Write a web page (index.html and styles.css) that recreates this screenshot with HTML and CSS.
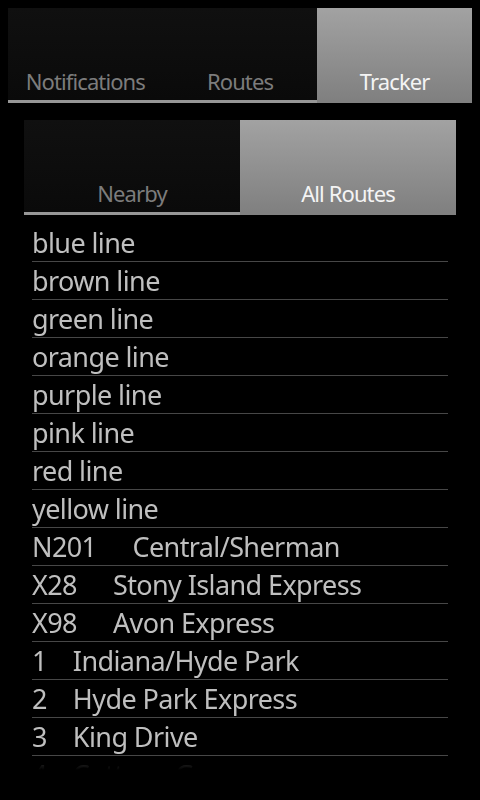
FILE: index.html
```html
<!DOCTYPE html>
<html>
<head>
<meta charset="utf-8">
<link rel="stylesheet" href="styles.css">
</head>
<body>
<div class="screen">
  <div class="tabs outer">
    <div class="tab">Notifications</div>
    <div class="tab">Routes</div>
    <div class="tab active">Tracker</div>
  </div>
  <div class="content">
    <div class="tabs inner">
      <div class="tab">Nearby</div>
      <div class="tab active">All Routes</div>
    </div>
    <div class="list">
      <div class="row">blue line</div>
      <div class="row">brown line</div>
      <div class="row">green line</div>
      <div class="row">orange line</div>
      <div class="row">purple line</div>
      <div class="row">pink line</div>
      <div class="row">red line</div>
      <div class="row">yellow line</div>
      <div class="row"><span class="num">N201</span><span class="name gap-n">Central/Sherman</span></div>
      <div class="row"><span class="num">X28</span><span class="name gap-x">Stony Island Express</span></div>
      <div class="row"><span class="num">X98</span><span class="name gap-x">Avon Express</span></div>
      <div class="row"><span class="num">1</span><span class="name gap-d">Indiana/Hyde Park</span></div>
      <div class="row"><span class="num">2</span><span class="name gap-d">Hyde Park Express</span></div>
      <div class="row"><span class="num">3</span><span class="name gap-d">King Drive</span></div>
      <div class="row"><span class="num">4</span><span class="name gap-d">Cottage Grove</span></div>
    </div>
  </div>
</div>
</body>
</html>
```

FILE: styles.css
```css
html, body {
  margin: 0;
  padding: 0;
  background: #000;
}
body {
  width: 480px;
  height: 800px;
  overflow: hidden;
  font-family: "Noto Sans", "Open Sans", sans-serif;
}
.screen {
  padding: 8px 8px 0 8px;
}
.tabs {
  display: flex;
  height: 95px;
}
.tab {
  flex: 1 1 0;
  box-sizing: border-box;
  display: flex;
  align-items: flex-end;
  justify-content: center;
  padding-bottom: 4px;
  font-size: 22px;
  letter-spacing: -0.9px;
  line-height: 30px;
  color: #7c7c7c;
  background: linear-gradient(#101010, #0a0a0a);
  border-bottom: 3px solid #979797;
}
.tab.active {
  color: #f4f4f4;
  background: linear-gradient(#a2a2a2, #808080);
  border-bottom: 3px solid #808080;
}
.content {
  padding: 17px 16px 0 16px;
}
.list {
  margin: 9px 8px 0 8px;
  height: 547px;
  overflow: hidden;
  -webkit-mask-image: linear-gradient(#000 0, #000 533px, rgba(0,0,0,0.2) 538px, transparent 546px);
  mask-image: linear-gradient(#000 0, #000 533px, rgba(0,0,0,0.2) 538px, transparent 546px);
}
.row {
  border-bottom: 1px solid #474747;
  font-size: 27px;
  letter-spacing: -0.6px;
  line-height: 36px;
  height: 36px;
  padding-top: 1px;
  color: #bfbfbf;
  white-space: nowrap;
}
.gap-n { margin-left: 36px; }
.gap-x { margin-left: 36px; }
.gap-d { margin-left: 26px; }
```
